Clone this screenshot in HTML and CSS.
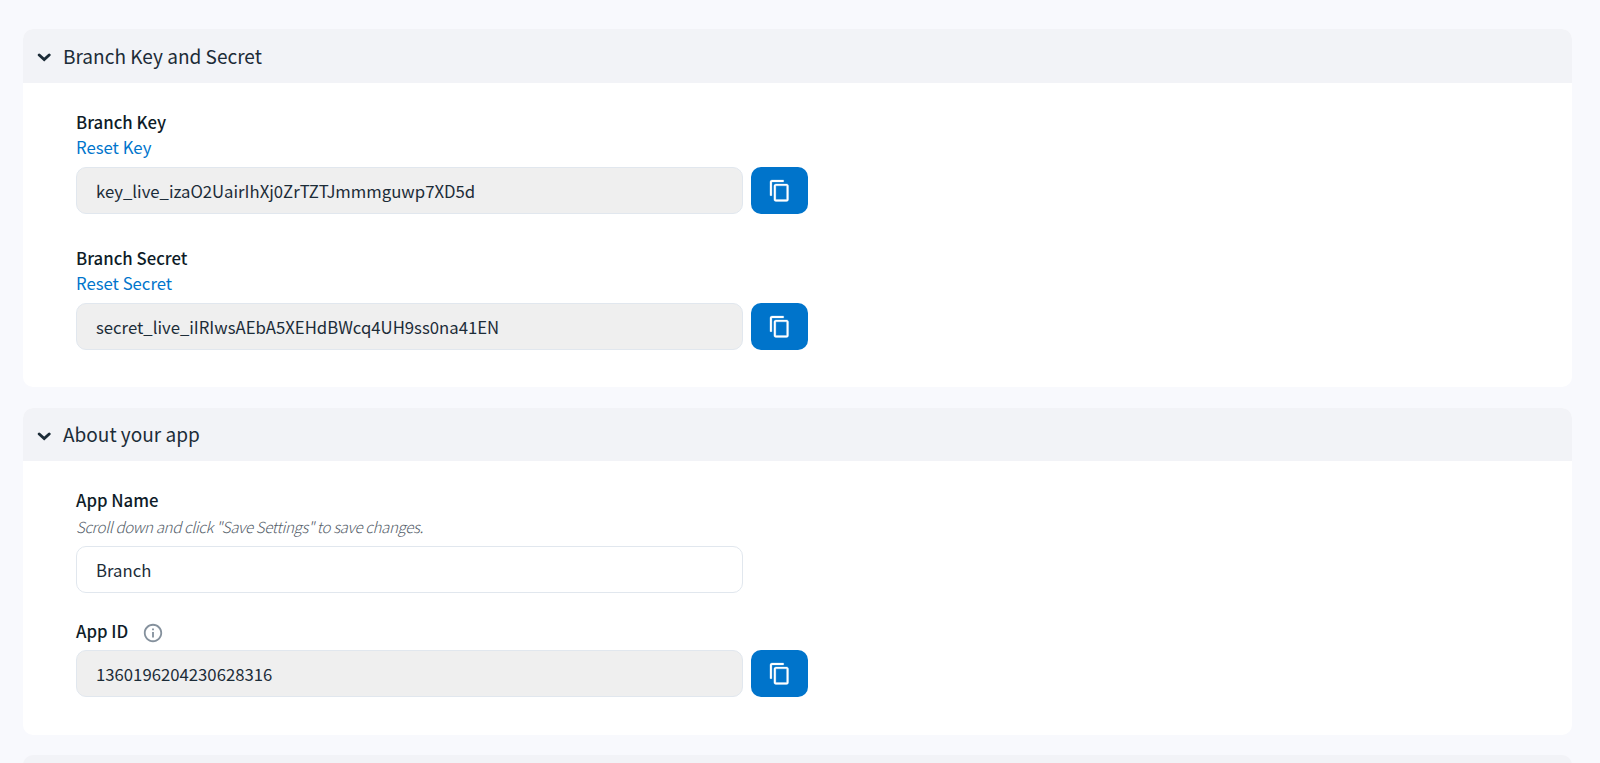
FILE: index.html
```html
<!DOCTYPE html>
<html lang="en">
<head>
    <meta charset="UTF-8">
    <meta name="viewport" content="width=device-width, initial-scale=1.0"/>
    <title>Account Settings</title>
    <link rel="stylesheet" href="styles.css">
</head>
<body>
<svg class="sprite" aria-hidden="true">
    <symbol id="chevron" viewBox="0 0 14 9">
        <path d="M2.200 2 L7.200 6.600 L12.200 2" fill="none" stroke="currentColor" stroke-width="2.900" stroke-linecap="round"/>
    </symbol>
    <symbol id="copy" viewBox="0 0 24 24">
        <path d="M16 1H4c-1.100 0-2 .9-2 2v14h2V3h12V1zm3 4H8c-1.100 0-2 .9-2 2v14c0 1.100.9 2 2 2h11c1.100 0 2-.9 2-2V7c0-1.100-.9-2-2-2zm0 16H8V7h11v14z" fill="currentColor" stroke="currentColor" stroke-width=".25"/>
    </symbol>
    <symbol id="info" viewBox="0 0 24 24">
        <path d="M11 17h2v-6h-2v6zm1-15C6.480 2 2 6.480 2 12s4.480 10 10 10 10-4.480 10-10S17.520 2 12 2zm0 18c-4.410 0-8-3.590-8-8s3.590-8 8-8 8 3.590 8 8-3.590 8-8 8zM11 9h2V7h-2v2z" fill="currentColor"/>
    </symbol>
</svg>

<div class="container">
    <section class="card card-keys">
        <h2 class="card-header"><svg class="chevron"><use href="#chevron"/></svg>Branch Key and Secret</h2>

        <div class="card-body">
            <div class="field">
                <label class="label" for="branchkey">Branch Key</label>
                <a href="#" class="reset">Reset Key</a>

                <div class="row">
                    <input id="branchkey" type="text" value="key_live_izaO2UairIhXj0ZrTZTJmmmguwp7XD5d" disabled>
                    <button type="button" class="btn-copy" aria-label="Copy"><svg><use href="#copy"/></svg></button>
                </div>
            </div>

            <div class="field">
                <label class="label" for="branchsecret">Branch Secret</label>
                <a href="#" class="reset">Reset Secret</a>

                <div class="row">
                    <input id="branchsecret" type="text" value="secret_live_iIRIwsAEbA5XEHdBWcq4UH9ss0na41EN" disabled>
                    <button type="button" class="btn-copy" aria-label="Copy"><svg><use href="#copy"/></svg></button>
                </div>
            </div>
        </div>
    </section>

    <section class="card card-app">
        <h2 class="card-header"><svg class="chevron"><use href="#chevron"/></svg>About your app</h2>

        <div class="card-body">
            <div class="field field-name">
                <label class="label" for="appname">App Name</label>
                <p class="hint">Scroll down and click "Save Settings" to save changes.</p>

                <div class="row">
                    <input id="appname" type="text" value="Branch">
                </div>
            </div>

            <div class="field">
                <label class="label label-info" for="appid">App ID <svg class="info"><use href="#info"/></svg></label>

                <div class="row">
                    <input id="appid" type="text" value="1360196204230628316" disabled>
                    <button type="button" class="btn-copy" aria-label="Copy"><svg><use href="#copy"/></svg></button>
                </div>
            </div>
        </div>
    </section>

    <!-- next section, cut off by the window -->
    <section class="card">
        <h2 class="card-header"></h2>
    </section>
</div>
</body>
</html>
```
FILE: styles.css
```css
* {
    box-sizing: border-box;
}

html, body {
    height: 100%;
    margin: 0;
}

body, input, button {
    font-family: "Source Sans Pro", "Noto Sans CJK SC", "Open Sans", sans-serif;
    font-size: 16.73px;
    color: #1c2c38;
}

body {
    background: #f8f9fd;
}

.sprite {
    display: none;
}

.container {
    height: 100vh;
    padding: 29px 28px 0 23px;
    overflow: hidden;
}

.card {
    margin-bottom: 21px;
    border-radius: 10px;
    background: #fff;
    overflow: hidden;
}

.card-keys {
    height: 358px;
}

.card-app {
    height: 327px;
    margin-bottom: 20px;
}

.card-header {
    display: flex;
    align-items: center;
    height: 53px;
    margin: 0;
    padding: 0 15px 2px 14px;
    background: #f2f3f7;
    font-size: 19.05px;
    font-weight: normal;
}

.card-keys .card-header {
    height: 54px;
}

.chevron {
    width: 14px;
    height: 9px;
    margin: 5px 12px 0 0;
}

.card-body {
    padding: 26px 53px;
}

.field {
    margin-bottom: 31px;
}

.field-name {
    margin-bottom: 26px;
}

.label {
    display: block;
    height: 26px;
    line-height: 26px;
    font-size: 16.75px;
    font-weight: 500;
    color: #0e1c28;
}

.label-info {
    display: flex;
    align-items: center;
    height: 31px;
    padding-bottom: 7px;
}

.info {
    width: 22px;
    height: 22px;
    margin: 4px 0 0 14px;
    color: #85919d;
}

.reset {
    display: block;
    height: 32px;
    line-height: 25px;
    color: #0075cc;
    text-decoration: none;
}

.hint {
    height: 33px;
    margin: 0;
    line-height: 26px;
    font-size: 15.2px;
    font-weight: 300;
    font-style: italic;
    letter-spacing: -0.39px;
    color: #55606a;
}

.row {
    display: flex;
    gap: 8px;
}

.row input {
    width: 667px;
    height: 47px;
    padding: 0 19px;
    border: 1px solid #e1e7ee;
    border-radius: 10px;
    background: #fff;
}

.row input:disabled {
    background: #efefef;
    color: #1c2c38;
}

.btn-copy {
    display: flex;
    align-items: center;
    justify-content: center;
    width: 57px;
    height: 47px;
    padding: 0;
    border: none;
    border-radius: 10px;
    background: #0074cb;
    color: #fff;
}

.btn-copy svg {
    width: 23.5px;
    height: 23.5px;
}
```
